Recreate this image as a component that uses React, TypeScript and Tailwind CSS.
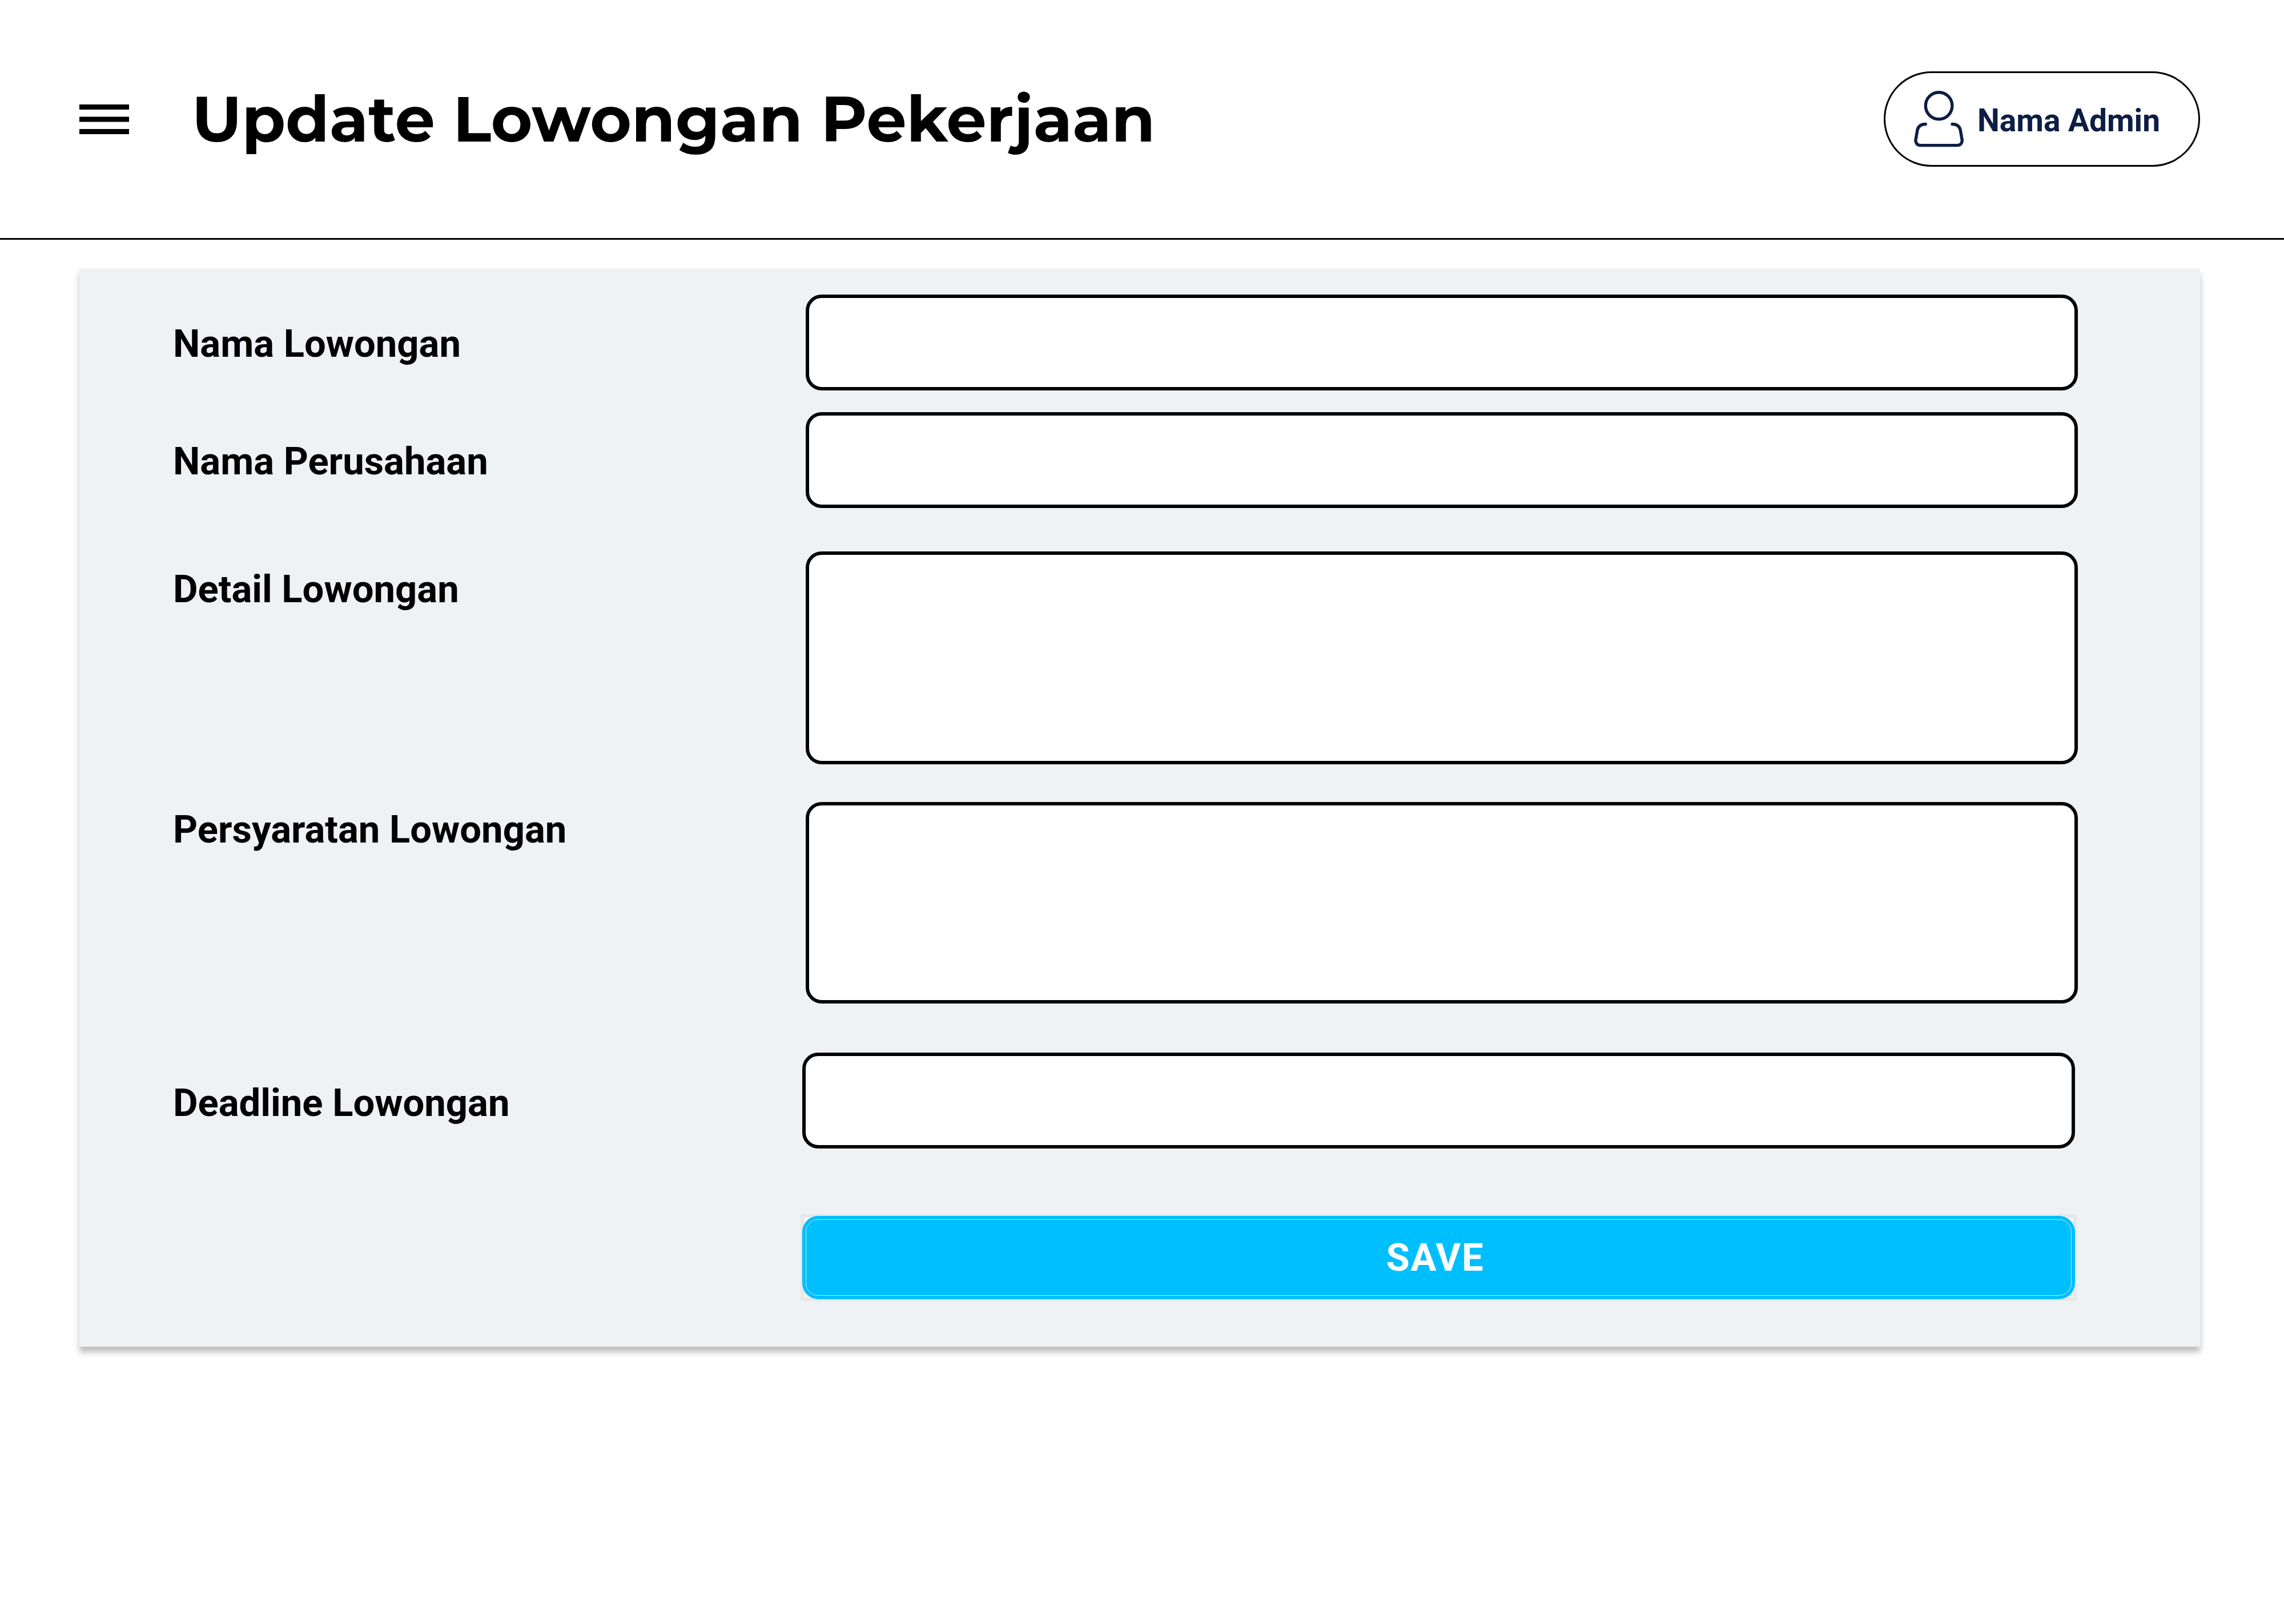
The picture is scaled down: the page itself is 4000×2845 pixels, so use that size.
import React, { useId } from "react";

type FieldProps = {
  label: string;
  multiline?: boolean;
  rowClass: string;
  labelClass: string;
  controlClass: string;
};

const controlBase =
  "block min-w-0 flex-1 resize-none rounded-[28px] border-[6px] border-black bg-white px-8 text-[67px] text-black outline-none";

function Field({ label, multiline, rowClass, labelClass, controlClass }: FieldProps) {
  const id = useId();
  return (
    <div className={`flex ${rowClass}`}>
      <label
        htmlFor={id}
        className={`shrink-0 text-[67px] leading-[80px] font-bold text-black ${labelClass}`}
      >
        {label}
      </label>
      {multiline ? (
        <textarea id={id} className={`${controlBase} py-6 ${controlClass}`} />
      ) : (
        <input id={id} type="text" className={`${controlBase} ${controlClass}`} />
      )}
    </div>
  );
}

function MenuIcon() {
  return (
    <svg viewBox="0 0 87 52" className="h-[52px] w-[87px]" fill="#000" aria-hidden="true">
      <rect x="0" y="0" width="87" height="9" />
      <rect x="0" y="21.5" width="87" height="9" />
      <rect x="0" y="43" width="87" height="9" />
    </svg>
  );
}

function UserIcon() {
  return (
    <svg
      viewBox="0 0 88 100"
      className="h-[100px] w-[88px] shrink-0"
      fill="none"
      stroke="#0d1d45"
      strokeWidth="5.4"
      strokeLinecap="round"
      aria-hidden="true"
    >
      <ellipse cx="43.6" cy="26.2" rx="23.3" ry="23.5" />
      <path d="M20.2 58.5C10.5 58.5 6.3 64 5.4 72L2.9 86.5C2.5 91.8 6.2 95.6 11.5 95.6H75.7C81 95.6 84.7 91.8 84.3 86.5L81.8 72C80.9 64 76.7 58.5 67 58.5" />
    </svg>
  );
}

export default function App() {
  return (
    <div className="min-h-screen bg-white font-[Roboto,sans-serif]">
      <header className="flex h-[420px] items-center border-b-[3px] border-black pr-[147px] pl-[139px]">
        <button type="button" aria-label="Menu" className="shrink-0">
          <MenuIcon />
        </button>
        <h1 className="ml-[110px] text-[111px] leading-[136px] font-bold whitespace-nowrap text-black [font-family:Montserrat,Inter,sans-serif]">
          Update Lowongan Pekerjaan
        </h1>
        <button
          type="button"
          className="ml-auto flex h-[167px] shrink-0 items-center gap-[23px] rounded-full border-[3px] border-black pr-[67px] pl-[50px] text-[55px] leading-[64px] font-bold text-[#0d1d45]"
        >
          <UserIcon />
          <span className="pt-1 whitespace-nowrap">Nama Admin</span>
        </button>
      </header>

      <main className="pt-[50px] pr-[147px] pl-[139px]">
        <form
          className="bg-[#eff2f5] pt-[46px] pb-[80px] pl-[164px] shadow-[0_10px_10px_rgba(0,0,0,0.25)]"
          onSubmit={(e) => e.preventDefault()}
        >
          <Field
            label="Nama Lowongan"
            rowClass="items-center pr-[214px]"
            labelClass="w-[1108px] pt-1"
            controlClass="h-[168px]"
          />
          <Field
            label="Nama Perusahaan"
            rowClass="mt-[38px] items-center pr-[214px]"
            labelClass="w-[1108px] pt-1"
            controlClass="h-[168px]"
          />
          <Field
            label="Detail Lowongan"
            multiline
            rowClass="mt-[76px] items-start pr-[214px]"
            labelClass="w-[1108px] pt-[26px]"
            controlClass="h-[373px]"
          />
          <Field
            label="Persyaratan Lowongan"
            multiline
            rowClass="mt-[66px] items-start pr-[214px]"
            labelClass="w-[1108px] pt-2"
            controlClass="h-[353px]"
          />
          <Field
            label="Deadline Lowongan"
            rowClass="mt-[86px] items-center pr-[219px]"
            labelClass="w-[1102px] pt-2"
            controlClass="h-[168px]"
          />
          <div className="mt-[115px] mr-[216px] ml-[1099px] rounded-[4px] bg-[#f3f6f8] p-[3px] shadow-[inset_0_0_0_6px_#e6e7e8]">
            <button
              type="submit"
              className="block w-full rounded-[28px] bg-[#00bfff] p-[6px]"
            >
              <span className="block rounded-[22px] border border-[#b8ecff] py-[26px] pr-3 text-[67px] leading-[80px] font-bold tracking-wide text-white">
                SAVE
              </span>
            </button>
          </div>
        </form>
      </main>
    </div>
  );
}
